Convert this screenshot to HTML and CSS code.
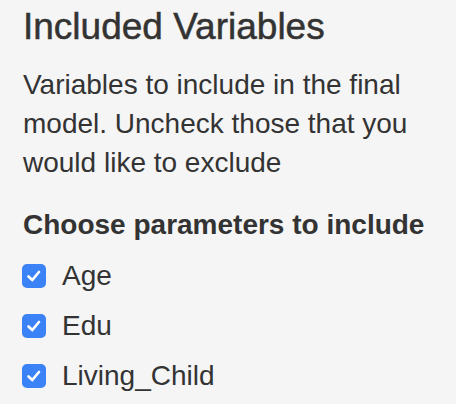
FILE: index.html
```html
<!DOCTYPE html>
<html>
<head>
<meta charset="utf-8">
<link rel="stylesheet" href="styles.css">
</head>
<body>
<div class="panel">
  <h3 class="title">Included Variables</h3>
  <p class="desc">Variables to include in the final model. Uncheck those that you would like to exclude</p>
  <div class="group">
    <label class="group-label">Choose parameters to include</label>
    <div class="options">
      <label class="option"><span class="box"><svg viewBox="0 0 24 24" width="24" height="24"><path d="M6.5 12.5 L10.3 16 L17 8" fill="none" stroke="#fff" stroke-width="2.7" stroke-linecap="round" stroke-linejoin="round"/></svg></span><span>Age</span></label>
      <label class="option"><span class="box"><svg viewBox="0 0 24 24" width="24" height="24"><path d="M6.5 12.5 L10.3 16 L17 8" fill="none" stroke="#fff" stroke-width="2.7" stroke-linecap="round" stroke-linejoin="round"/></svg></span><span>Edu</span></label>
      <label class="option"><span class="box"><svg viewBox="0 0 24 24" width="24" height="24"><path d="M6.5 12.5 L10.3 16 L17 8" fill="none" stroke="#fff" stroke-width="2.7" stroke-linecap="round" stroke-linejoin="round"/></svg></span><span>Living_Child</span></label>
    </div>
  </div>
</div>
</body>
</html>
```

FILE: styles.css
```css
html, body {
  margin: 0;
  background: #f5f5f5;
}
body {
  font-family: "Liberation Sans", Arial, sans-serif;
  color: #333;
}
.panel {
  padding: 7px 0 0 23px;
}
.title {
  margin: 0;
  font-size: 37px;
  line-height: 40px;
  font-weight: 400;
  -webkit-text-stroke: 0.5px #333;
}
.desc {
  margin: 18px 0 0;
  font-size: 28px;
  line-height: 39px;
  width: 410px;
}
.group {
  margin-top: 23px;
}
.group-label {
  display: block;
  font-size: 28px;
  line-height: 39px;
  font-weight: 700;
}
.options {
  margin-top: 12px;
  display: flex;
  flex-direction: column;
  gap: 11px;
}
.option {
  display: flex;
  align-items: center;
  font-size: 28px;
  line-height: 39px;
  gap: 16px;
  margin-left: -1px;
}
.box {
  width: 24px;
  height: 24px;
  border-radius: 5px;
  background: #3b82f6;
  display: flex;
  align-items: center;
  justify-content: center;
}
.box svg {
  display: block;
}
```
